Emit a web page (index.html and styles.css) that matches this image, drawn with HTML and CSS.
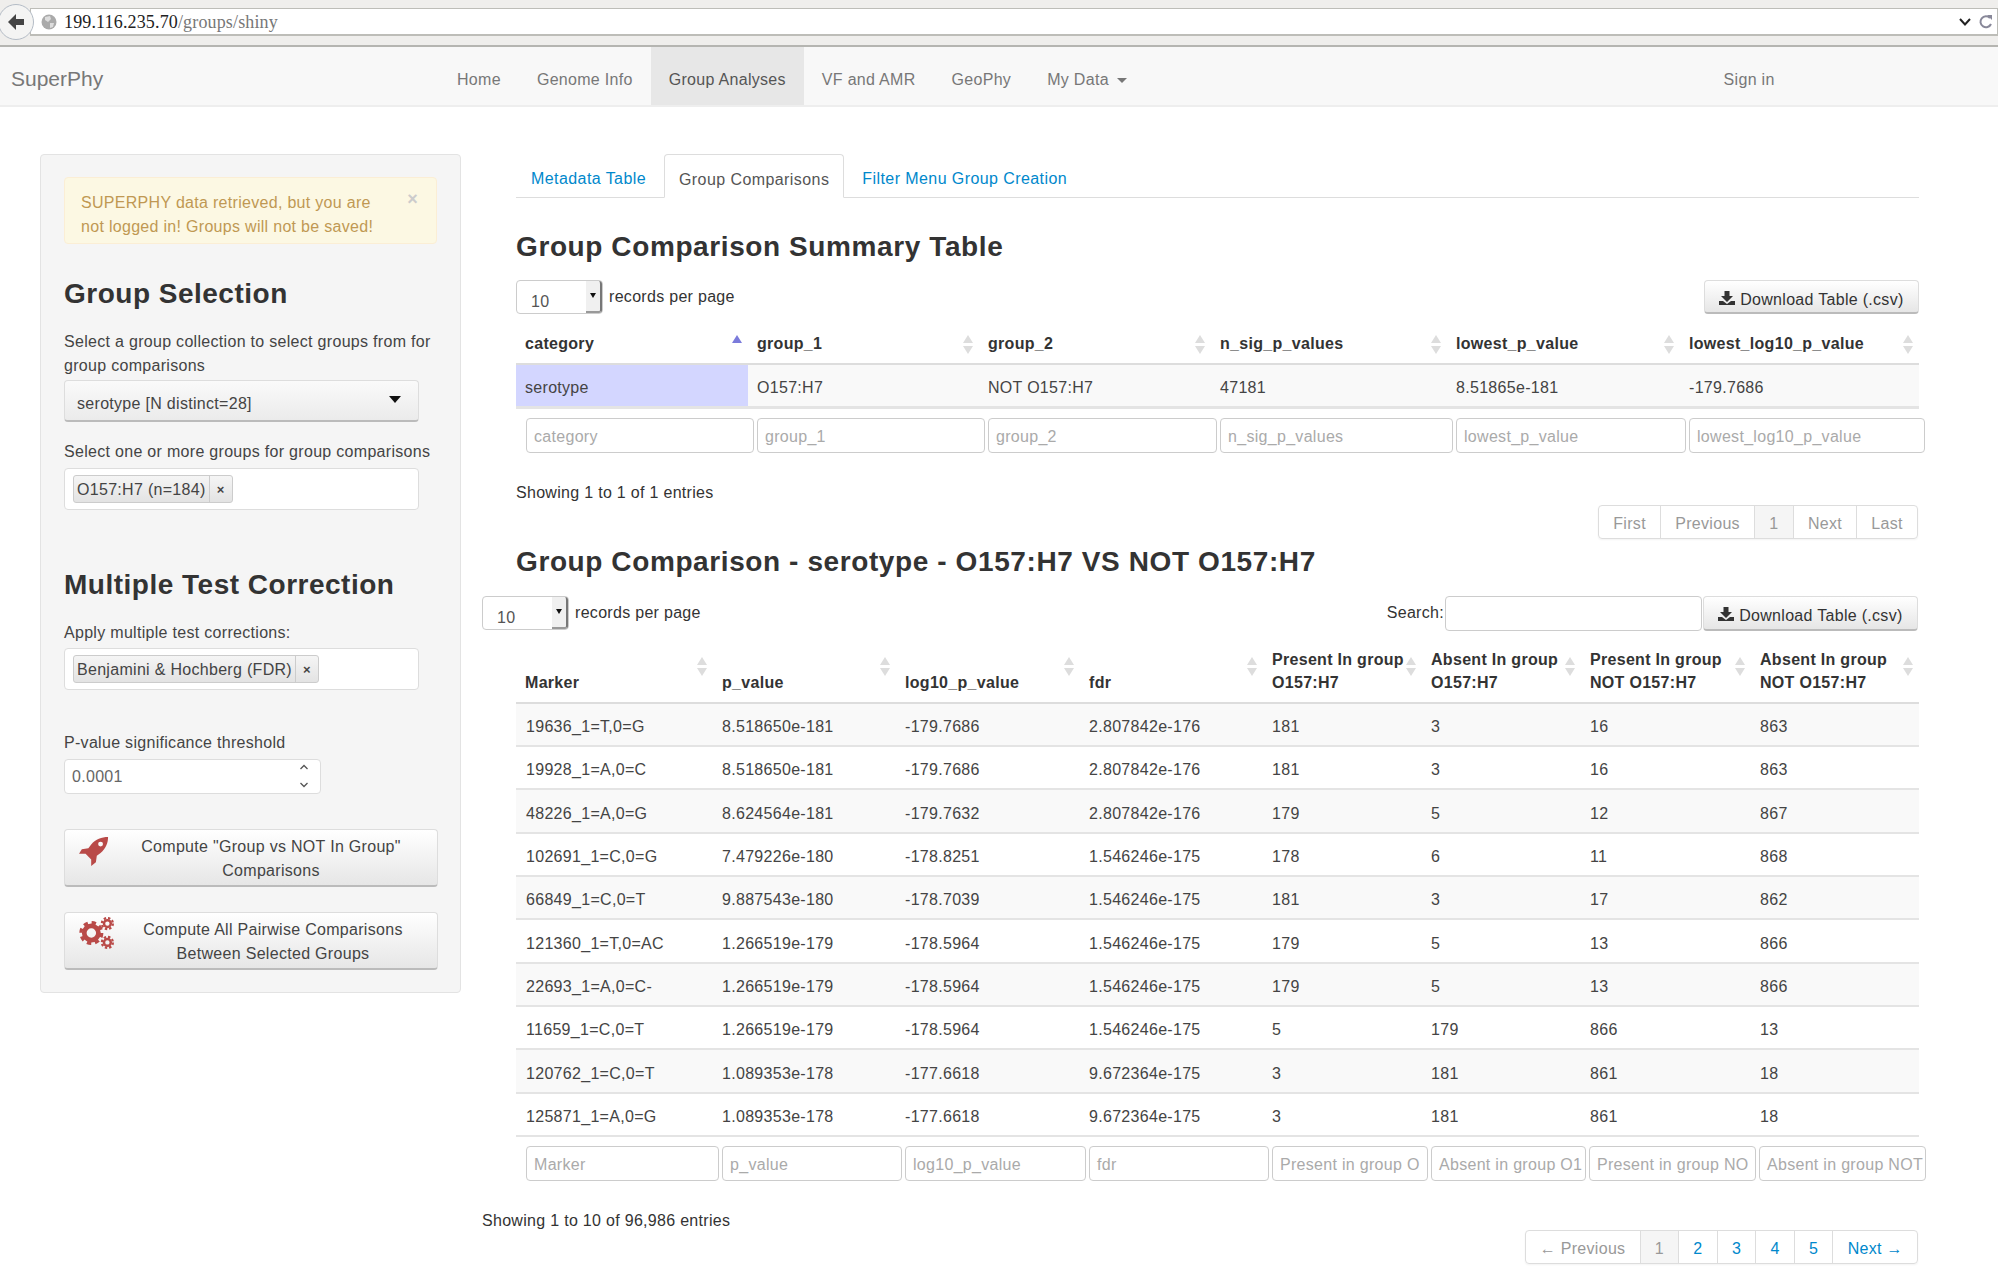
FILE: index.html
```html
<!DOCTYPE html>
<html lang="en">
<head>
  <meta charset="UTF-8">
  <title>SuperPhy - Group Analyses</title>
  <link rel="stylesheet" href="styles.css">
</head>
<body>

  <div class="urlbar-wrap">
    <div class="back-btn">
      <svg width="20" height="20" viewBox="0 0 20 20"><path d="M10 2 L2 10 L10 18 L10 13 L18 13 L18 7 L10 7 Z" fill="#444"/></svg>
    </div>
    <div class="urlbar">
      <svg class="globe" width="16" height="16" viewBox="0 0 16 16"><circle cx="8" cy="8" r="7.5" fill="#aaa"/><path d="M4 3 L9 2 L10 5 L7 8 L4 6 Z M9 9 L13 9 L12 13 L9 14 Z" fill="#ddd"/></svg>
      <span class="host">199.116.235.70</span><span class="path">/groups/shiny</span>
      <span class="url-right">
        <svg width="12" height="8" viewBox="0 0 12 8"><path d="M1 1 L6 6.5 L11 1" fill="none" stroke="#222" stroke-width="2"/></svg>
        <svg width="14" height="16" viewBox="0 0 14 16"><path d="M11 4 A5.5 5.5 0 1 0 12 10" fill="none" stroke="#889" stroke-width="2"/><path d="M8 1 L13 1 L13 6 Z" fill="#889"/></svg>
      </span>
    </div>
  </div>

  <nav class="navbar">
    <a class="brand">SuperPhy</a>
    <ul class="nav">
      <li><a>Home</a></li>
      <li><a>Genome Info</a></li>
      <li class="active"><a>Group Analyses</a></li>
      <li><a>VF and AMR</a></li>
      <li><a>GeoPhy</a></li>
      <li><a>My Data <b class="caret"></b></a></li>
    </ul>
    <a class="signin">Sign in</a>
  </nav>

  <div class="content">
    <aside class="well">
      <div class="alert">
        <span class="close">×</span>
        SUPERPHY data retrieved, but you are<br>not logged in! Groups will not be saved!
      </div>

      <h3 class="first">Group Selection</h3>
      <label class="two-line">Select a group collection to select groups from for group comparisons</label>
      <div class="selectize-one">serotype [N distinct=28]<b class="arrow"></b></div>

      <label class="after-one">Select one or more groups for group comparisons</label>
      <div class="selectize-multi">
        <span class="chip"><span class="chip-text">O157:H7 (n=184)</span><span class="chip-x">×</span></span>
      </div>

      <h3 class="second">Multiple Test Correction</h3>
      <label class="apply">Apply multiple test corrections:</label>
      <div class="selectize-multi tight">
        <span class="chip"><span class="chip-text">Benjamini &amp; Hochberg (FDR)</span><span class="chip-x">×</span></span>
      </div>

      <label class="pvalue">P-value significance threshold</label>
      <div class="number-input">0.0001
        <span class="spin">
          <svg width="10" height="28" viewBox="0 0 10 28"><path d="M1.5 7 L5 3.5 L8.5 7 M1.5 21 L5 24.5 L8.5 21" fill="none" stroke="#555" stroke-width="1.3"/></svg>
        </span>
      </div>

      <button class="compute one">
        <svg class="compute-icon" width="30" height="30" viewBox="0 0 32 32"><path d="M31 1 C24 1 18 3 13 9 L10 13 L3 14 L0 19 L7 19 L13 25 L13 32 L18 28 L19 21 L23 18 C29 13 31 7 31 1 Z M23 6 A2.6 2.6 0 1 1 23 11.2 A2.6 2.6 0 1 1 23 6 Z" fill="#b94a48" fill-rule="evenodd"/></svg>
        <span>Compute "Group vs NOT In Group"<br>Comparisons</span>
      </button>
      <button class="compute two">
        <svg class="compute-icon" width="36" height="34" viewBox="0 0 38 36">
          <g fill="none" stroke="#b94a48">
            <circle cx="13" cy="18" r="7.5" stroke-width="5"/>
            <circle cx="13" cy="18" r="11" stroke-width="3.5" stroke-dasharray="4.6 4.04"/>
            <circle cx="30" cy="8" r="3.6" stroke-width="2.6"/>
            <circle cx="30" cy="8" r="5.8" stroke-width="2.4" stroke-dasharray="2.5 2.05"/>
            <circle cx="30" cy="28" r="3.6" stroke-width="2.6"/>
            <circle cx="30" cy="28" r="5.8" stroke-width="2.4" stroke-dasharray="2.5 2.05"/>
          </g>
        </svg>
        <span>Compute All Pairwise Comparisons<br>Between Selected Groups</span>
      </button>
    </aside>

    <main class="main">
      <ul class="tabs">
        <li><a>Metadata Table</a></li>
        <li class="active"><a>Group Comparisons</a></li>
        <li><a>Filter Menu Group Creation</a></li>
      </ul>

      <h3 class="summary-title">Group Comparison Summary Table</h3>

      <div class="controls">
        <div class="length">
          <span class="select-box">10<span class="select-btn"><b></b></span></span>
          <span class="length-text">records per page</span>
        </div>
        <a class="download"><svg width="16" height="14" viewBox="0 0 16 14"><path d="M5.5 0 H10.5 V5 H14 L8 11 L2 5 H5.5 Z M0 10 H4 L8 13 L12 10 H16 V14 H0 Z" fill="#333"/></svg> Download Table (.csv)</a>
      </div>

      <table class="data summary">
        <colgroup><col class="s1"><col class="s2"><col class="s3"><col class="s4"><col class="s5"><col class="s6"></colgroup>
        <thead>
          <tr>
            <th class="sorted">category<i class="sort"><b class="up"></b></i></th>
            <th>group_1<i class="sort"><b class="up"></b><b class="down"></b></i></th>
            <th>group_2<i class="sort"><b class="up"></b><b class="down"></b></i></th>
            <th>n_sig_p_values<i class="sort"><b class="up"></b><b class="down"></b></i></th>
            <th>lowest_p_value<i class="sort"><b class="up"></b><b class="down"></b></i></th>
            <th>lowest_log10_p_value<i class="sort"><b class="up"></b><b class="down"></b></i></th>
          </tr>
        </thead>
        <tbody>
          <tr>
            <td class="sorted-cell">serotype</td>
            <td>O157:H7</td>
            <td>NOT O157:H7</td>
            <td>47181</td>
            <td>8.51865e-181</td>
            <td>-179.7686</td>
          </tr>
        </tbody>
      </table>

      <div class="filters s-filters">
        <span class="filter">category</span>
        <span class="filter">group_1</span>
        <span class="filter">group_2</span>
        <span class="filter">n_sig_p_values</span>
        <span class="filter">lowest_p_value</span>
        <span class="filter">lowest_log10_p_value</span>
      </div>

      <div class="info first-info">Showing 1 to 1 of 1 entries</div>
      <div class="pager-row first-pager">
        <ul class="pagination">
          <li class="off">First</li>
          <li class="off">Previous</li>
          <li class="current">1</li>
          <li class="off">Next</li>
          <li class="off">Last</li>
        </ul>
      </div>

      <h3 class="compare-title">Group Comparison - serotype - O157:H7 VS NOT O157:H7</h3>

      <div class="controls wide">
        <div class="length">
          <span class="select-box">10<span class="select-btn"><b></b></span></span>
          <span class="length-text">records per page</span>
        </div>
        <div class="search-group">
          <span class="search-label">Search:</span>
          <span class="search-input"></span>
          <a class="download"><svg width="16" height="14" viewBox="0 0 16 14"><path d="M5.5 0 H10.5 V5 H14 L8 11 L2 5 H5.5 Z M0 10 H4 L8 13 L12 10 H16 V14 H0 Z" fill="#333"/></svg> Download Table (.csv)</a>
        </div>
      </div>

      <table class="data compare">
        <colgroup><col class="c1"><col class="c2"><col class="c3"><col class="c4"><col class="c5"><col class="c6"><col class="c7"><col class="c8"></colgroup>
        <thead>
          <tr>
            <th>Marker<i class="sort"><b class="up"></b><b class="down"></b></i></th>
            <th>p_value<i class="sort"><b class="up"></b><b class="down"></b></i></th>
            <th>log10_p_value<i class="sort"><b class="up"></b><b class="down"></b></i></th>
            <th>fdr<i class="sort"><b class="up"></b><b class="down"></b></i></th>
            <th>Present In group O157:H7<i class="sort"><b class="up"></b><b class="down"></b></i></th>
            <th>Absent In group O157:H7<i class="sort"><b class="up"></b><b class="down"></b></i></th>
            <th>Present In group NOT O157:H7<i class="sort"><b class="up"></b><b class="down"></b></i></th>
            <th>Absent In group NOT O157:H7<i class="sort"><b class="up"></b><b class="down"></b></i></th>
          </tr>
        </thead>
        <tbody>
          <tr><td>19636_1=T,0=G</td><td>8.518650e-181</td><td>-179.7686</td><td>2.807842e-176</td><td>181</td><td>3</td><td>16</td><td>863</td></tr>
          <tr><td>19928_1=A,0=C</td><td>8.518650e-181</td><td>-179.7686</td><td>2.807842e-176</td><td>181</td><td>3</td><td>16</td><td>863</td></tr>
          <tr><td>48226_1=A,0=G</td><td>8.624564e-181</td><td>-179.7632</td><td>2.807842e-176</td><td>179</td><td>5</td><td>12</td><td>867</td></tr>
          <tr><td>102691_1=C,0=G</td><td>7.479226e-180</td><td>-178.8251</td><td>1.546246e-175</td><td>178</td><td>6</td><td>11</td><td>868</td></tr>
          <tr><td>66849_1=C,0=T</td><td>9.887543e-180</td><td>-178.7039</td><td>1.546246e-175</td><td>181</td><td>3</td><td>17</td><td>862</td></tr>
          <tr><td>121360_1=T,0=AC</td><td>1.266519e-179</td><td>-178.5964</td><td>1.546246e-175</td><td>179</td><td>5</td><td>13</td><td>866</td></tr>
          <tr><td>22693_1=A,0=C-</td><td>1.266519e-179</td><td>-178.5964</td><td>1.546246e-175</td><td>179</td><td>5</td><td>13</td><td>866</td></tr>
          <tr><td>11659_1=C,0=T</td><td>1.266519e-179</td><td>-178.5964</td><td>1.546246e-175</td><td>5</td><td>179</td><td>866</td><td>13</td></tr>
          <tr><td>120762_1=C,0=T</td><td>1.089353e-178</td><td>-177.6618</td><td>9.672364e-175</td><td>3</td><td>181</td><td>861</td><td>18</td></tr>
          <tr><td>125871_1=A,0=G</td><td>1.089353e-178</td><td>-177.6618</td><td>9.672364e-175</td><td>3</td><td>181</td><td>861</td><td>18</td></tr>
        </tbody>
      </table>

      <div class="filters c-filters">
        <span class="filter">Marker</span>
        <span class="filter">p_value</span>
        <span class="filter">log10_p_value</span>
        <span class="filter">fdr</span>
        <span class="filter">Present in group O</span>
        <span class="filter">Absent in group O1</span>
        <span class="filter">Present in group NO</span>
        <span class="filter">Absent in group NOT</span>
      </div>

      <div class="info second-info">Showing 1 to 10 of 96,986 entries</div>
      <div class="pager-row second-pager">
        <ul class="pagination">
          <li class="off">← Previous</li>
          <li class="current">1</li>
          <li>2</li>
          <li>3</li>
          <li>4</li>
          <li>5</li>
          <li>Next →</li>
        </ul>
      </div>
    </main>
  </div>

</body>
</html>
```

FILE: styles.css
```css
* {
  box-sizing: border-box;
}
html, body {
  height: 1281px;
  overflow: hidden;
}
body {
  margin: 0;
  font-family: "Liberation Sans", Arial, sans-serif;
  font-size: 16px;
  letter-spacing: .3px;
  line-height: 24px;
  color: #333;
  background: #fff;
}

/* browser chrome */
.urlbar-wrap {
  height: 47px;
  padding-top: 8px;
  background: #efeeec;
  border-bottom: 2px solid #b5b5b1;
  position: relative;
}
.back-btn {
  position: absolute;
  left: -2px;
  top: 4px;
  width: 36px;
  height: 36px;
  border: 1px solid #b4bcc6;
  border-radius: 50%;
  background: #f4f4f3;
  display: flex;
  align-items: center;
  justify-content: center;
}
.urlbar {
  height: 28px;
  margin-left: 30px;
  padding-left: 10px;
  background: #fff;
  border: 1px solid #bdbdb8;
  border-bottom-width: 2px;
  display: flex;
  align-items: center;
  font-family: "Liberation Serif", serif;
  font-size: 18px;
  letter-spacing: .15px;
}
.globe {
  margin-right: 7px;
}
.host {
  color: #222;
}
.path {
  color: #777;
}
.url-right {
  margin-left: auto;
  display: flex;
  align-items: center;
  gap: 8px;
  padding-right: 4px;
}

/* navbar */
.navbar {
  height: 60px;
  background: #f8f8f8;
  border-bottom: 2px solid #eee;
  display: flex;
  color: #777;
}
.brand {
  width: 439px;
  padding-left: 11px;
  line-height: 63px;
  font-size: 21px;
  letter-spacing: 0;
}
.nav {
  list-style: none;
  margin: 0;
  padding: 0;
  display: flex;
}
.nav a {
  display: block;
  padding: 0 18px;
  line-height: 66px;
  height: 58px;
}
.nav li.active {
  background: #e7e7e7;
  color: #555;
}
.caret {
  display: inline-block;
  margin-left: 3px;
  vertical-align: 2px;
  border-top: 5px solid #777;
  border-left: 5px solid transparent;
  border-right: 5px solid transparent;
}
.signin {
  margin-left: 579px;
  line-height: 66px;
}

/* layout */
.content {
  display: flex;
  padding: 47px 0 0 40px;
}

/* sidebar */
.well {
  width: 421px;
  height: 839px;
  padding: 22px 23px 0;
  background: #f5f5f5;
  border: 1px solid #e3e3e3;
  border-radius: 4px;
  flex: none;
}
.alert {
  position: relative;
  height: 67px;
  padding: 13px 16px;
  background: #fcf8e3;
  border: 1px solid #fbeed5;
  border-radius: 4px;
  color: #c09853;
}
.close {
  position: absolute;
  right: 18px;
  top: 9px;
  font-weight: bold;
  font-size: 18px;
  color: #ccc;
}
.well h3 {
  margin: 0;
  font-size: 28px;
  letter-spacing: .5px;
  line-height: 36px;
  color: #333;
}
.well h3.first {
  margin-top: 32px;
}
.well h3.second {
  margin-top: 57px;
}
.well label {
  display: block;
  color: #444;
}
.two-line {
  margin-top: 18px;
}
.after-one {
  margin-top: 18px;
}
.apply {
  margin-top: 18px;
}
.pvalue {
  margin-top: 41px;
}
.selectize-one {
  position: relative;
  width: 355px;
  height: 42px;
  margin-top: 2px;
  padding: 11px 12px 0;
  border: 1px solid #ddd;
  border-bottom: 2px solid #bbb;
  border-radius: 4px;
  background: linear-gradient(#fafafa, #ebebeb);
  color: #444;
}
.arrow {
  position: absolute;
  right: 17px;
  top: 15px;
  border-top: 7px solid #111;
  border-left: 6px solid transparent;
  border-right: 6px solid transparent;
}
.selectize-multi {
  width: 355px;
  height: 42px;
  margin-top: 4px;
  padding: 6px 8px;
  background: #fff;
  border: 1px solid #ddd;
  border-radius: 4px;
}
.selectize-multi.tight {
  margin-top: 3px;
}
.chip {
  display: inline-flex;
  height: 28px;
  line-height: 27px;
  background: linear-gradient(#f5f5f5, #e3e3e3);
  border: 1px solid #ccc;
  border-radius: 3px;
  color: #444;
}
.chip-text {
  padding: 0 3px;
}
.chip-x {
  width: 23px;
  text-align: center;
  font-size: 13px;
  font-weight: bold;
  border-left: 1px solid #ccc;
}
.number-input {
  position: relative;
  width: 257px;
  height: 35px;
  margin-top: 4px;
  padding: 5px 7px;
  background: #fff;
  border: 1px solid #ddd;
  border-radius: 4px;
  color: #666;
}
.spin {
  position: absolute;
  right: 11px;
  top: 2px;
}
.compute {
  display: flex;
  align-items: center;
  position: relative;
  width: 374px;
  height: 58px;
  padding: 2px 0 0;
  background: linear-gradient(#fff, #e6e6e6);
  border: 1px solid #ddd;
  border-bottom: 2px solid #bbb;
  border-radius: 4px;
  font: inherit;
  letter-spacing: inherit;
  color: #444;
}
.compute span {
  flex: 1;
  padding-left: 40px;
  text-align: center;
}
.compute.two span {
  padding-left: 44px;
}
.compute-icon {
  position: absolute;
  left: 14px;
  top: 6px;
}
.compute.one {
  margin-top: 35px;
}
.compute.two {
  margin-top: 25px;
}
.compute.two .compute-icon {
  top: 3px;
}

/* main column */
.main {
  width: 1403px;
  margin-left: 55px;
  flex: none;
}
.tabs {
  list-style: none;
  margin: 0;
  padding: 0 0 0 1px;
  height: 44px;
  display: flex;
  border-bottom: 1px solid #ddd;
  color: #0088cc;
  letter-spacing: .42px;
}
.tabs a {
  display: block;
  padding: 0 14px;
  line-height: 50px;
}
.tabs li {
  margin-right: 4px;
}
.tabs li.active {
  height: 44px;
  background: #fff;
  border: 1px solid #ddd;
  border-bottom-color: #fff;
  border-radius: 4px 4px 0 0;
  color: #555;
}
.main h3 {
  margin: 0;
  font-size: 28px;
  letter-spacing: .6px;
  line-height: 36px;
  color: #333;
}
.summary-title {
  padding-top: 31px;
  height: 67px;
}
.controls {
  display: flex;
  justify-content: space-between;
  align-items: flex-start;
  margin-top: 15px;
}
.length {
  display: flex;
}
.select-box {
  position: relative;
  width: 87px;
  height: 34px;
  padding: 9px 14px 0;
  border: 1px solid #ccc;
  border-radius: 4px;
  color: #555;
}
.select-btn {
  position: absolute;
  right: 0;
  top: 0;
  bottom: 0;
  width: 16px;
  background: #f0f0f0;
  border-right: 2px solid #777;
  border-bottom: 2px solid #999;
  border-radius: 0 3px 3px 0;
}
.select-btn b {
  position: absolute;
  left: 4px;
  top: 12px;
  border-top: 5px solid #111;
  border-left: 3px solid transparent;
  border-right: 3px solid transparent;
}
.length-text {
  margin-left: 6px;
  line-height: 34px;
}
.download {
  display: block;
  width: 215px;
  height: 34px;
  text-align: center;
  line-height: 37px;
  background: linear-gradient(#fff, #e6e6e6);
  border: 1px solid #ddd;
  border-bottom: 2px solid #bbb;
  border-radius: 4px;
  color: #333;
  white-space: nowrap;
  overflow: hidden;
}

/* tables */
.data {
  width: 100%;
  table-layout: fixed;
  border-collapse: collapse;
}
.s1 { width: 232px; }
.s2 { width: 231px; }
.s3 { width: 232px; }
.s4 { width: 236px; }
.s5 { width: 233px; }
.s6 { width: 239px; }
.c1 { width: 197px; }
.c2 { width: 183px; }
.c3 { width: 184px; }
.c4 { width: 183px; }
.c5 { width: 159px; }
.c6 { width: 159px; }
.c7 { width: 170px; }
.c8 { width: 168px; }
.data th {
  position: relative;
  text-align: left;
  vertical-align: bottom;
  padding: 0 9px 8px;
  line-height: 23px;
  font-weight: bold;
  color: #333;
  border-bottom: 2px solid #ddd;
}
.summary thead tr {
  height: 50px;
}
.compare thead tr {
  height: 60px;
}
.data td {
  padding: 6px 9px 0;
  height: 43px;
  border-bottom: 2px solid #e4e4e4;
  color: #444;
}
.compare td:first-child {
  padding-left: 10px;
}
.compare tbody tr:nth-child(3n) td {
  height: 44px;
}
.summary td {
  border-bottom-width: 3px;
  background: #f9f9f9;
}
.data td.sorted-cell {
  background: #d3d6ff;
}
.compare tbody tr:nth-child(odd) td {
  background: #f9f9f9;
}
.sort {
  position: absolute;
  right: 6px;
  top: 21px;
  width: 10px;
  height: 19px;
}
.compare .sort {
  top: 14px;
}
.sort b {
  position: absolute;
  left: 0;
  border-left: 5px solid transparent;
  border-right: 5px solid transparent;
}
.sort .up {
  top: 0;
  border-bottom: 8px solid #ddd;
}
.sort .down {
  bottom: 0;
  border-top: 8px solid #ddd;
}
th.sorted .sort .up {
  border-bottom-color: #7b7bdb;
}
.filters {
  display: grid;
  margin-top: 9px;
  margin-left: 10px;
  column-gap: 3px;
}
.s-filters {
  grid-template-columns: 228px 228px 229px 233px 230px 236px;
}
.c-filters {
  grid-template-columns: 193px 180px 181px 180px 156px 155px 167px 167px;
}
.filter {
  display: block;
  height: 35px;
  padding: 0 7px;
  line-height: 36px;
  border: 1px solid #ccc;
  border-radius: 4px;
  color: #aaa;
  background: #fff;
  overflow: hidden;
  white-space: nowrap;
}
.info {
  color: #333;
}
.first-info {
  margin-top: 28px;
}
.pager-row {
  display: flex;
  justify-content: flex-end;
}
.first-pager {
  margin-top: 0;
  padding-right: 1px;
}
.pagination {
  list-style: none;
  margin: 0;
  padding: 0;
  display: flex;
  height: 34px;
  border: 1px solid #ddd;
  border-radius: 4px;
  box-shadow: 0 1px 2px rgba(0,0,0,.05);
  color: #0088cc;
}
.pagination li {
  padding: 0 14.2px;
  line-height: 35px;
  border-left: 1px solid #ddd;
}
.pagination li:first-child {
  border-left: 0;
}
.pagination .off {
  color: #999;
}
.pagination .current {
  background: #f5f5f5;
  color: #999;
}
.compare-title {
  margin-top: 5px !important;
  height: 36px;
  white-space: nowrap;
}
.controls.wide {
  margin-top: 16px;
  margin-left: -34px;
}
.search-group {
  display: flex;
  margin-right: 1px;
}
.search-label {
  line-height: 34px;
}
.search-input {
  display: block;
  width: 257px;
  height: 35px;
  margin: 0 1px;
  border: 1px solid #ccc;
  border-radius: 4px;
}
.controls.wide .download {
  height: 35px;
}
.compare {
  margin-top: 12px;
}
.second-info {
  margin-top: 28px;
  margin-left: -34px;
}
.second-pager {
  margin-top: -3px;
  padding-right: 1px;
}
```
